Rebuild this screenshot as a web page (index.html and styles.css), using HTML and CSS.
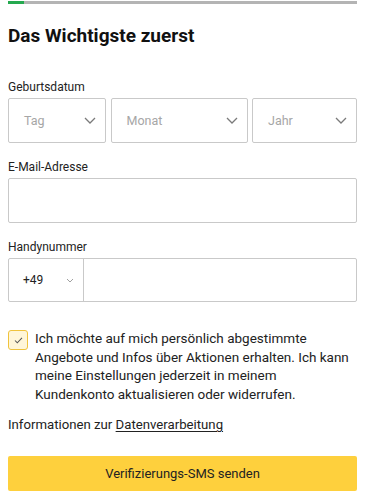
FILE: index.html
```html
<!DOCTYPE html>
<html lang="de">
<head>
    <meta charset="UTF-8">
    <meta name="viewport" content="width=device-width, initial-scale=1.0">
    <title>Das Wichtigste zuerst</title>
    <link rel="stylesheet" href="styles.css">
</head>
<body>
    <div class="progress"><div class="progress-fill"></div></div>

    <h1>Das Wichtigste zuerst</h1>

    <form class="signup">
        <div class="field">
            <label>Geburtsdatum</label>
            <div class="date-row">
                <div class="select">
                    <span class="placeholder">Tag</span>
                    <svg class="chevron" viewBox="0 0 12 7" width="12" height="7"><path d="M1 1l5 5 5-5" fill="none" stroke="currentColor" stroke-width="1.3"/></svg>
                </div>
                <div class="select">
                    <span class="placeholder">Monat</span>
                    <svg class="chevron" viewBox="0 0 12 7" width="12" height="7"><path d="M1 1l5 5 5-5" fill="none" stroke="currentColor" stroke-width="1.3"/></svg>
                </div>
                <div class="select">
                    <span class="placeholder">Jahr</span>
                    <svg class="chevron" viewBox="0 0 12 7" width="12" height="7"><path d="M1 1l5 5 5-5" fill="none" stroke="currentColor" stroke-width="1.3"/></svg>
                </div>
            </div>
        </div>

        <div class="field">
            <label>E-Mail-Adresse</label>
            <div class="input"></div>
        </div>

        <div class="field">
            <label>Handynummer</label>
            <div class="phone">
                <div class="country">
                    <span>+49</span>
                    <svg class="chevron-small" viewBox="0 0 8 5" width="8" height="5"><path d="M1 1l3 3 3-3" fill="none" stroke="currentColor" stroke-width="1"/></svg>
                </div>
                <div class="phone-number"></div>
            </div>
        </div>

        <div class="consent">
            <div class="checkbox">
                <svg viewBox="0 0 10 8" width="9" height="7"><path d="M1 4l2.6 2.6L9 1" fill="none" stroke="currentColor" stroke-width="1.2"/></svg>
            </div>
            <p>Ich möchte auf mich persönlich abgestimmte Angebote und Infos über Aktionen erhalten. Ich kann meine Einstellungen jederzeit in meinem Kundenkonto aktualisieren oder widerrufen.</p>
        </div>

        <p class="info">Informationen zur <a href="#">Datenverarbeitung</a></p>

        <button type="button">Verifizierungs-SMS senden</button>
    </form>
</body>
</html>
```

FILE: styles.css
```css
body {
    font-family: Roboto, "Liberation Sans", Arial, sans-serif;
    margin: 0;
    padding: 1px 10px 8px 8px;
    color: #222;
    background: #fff;
}
.progress {
    height: 3px;
    background-color: #b4b4b4;
}
.progress-fill {
    width: 16px;
    height: 100%;
    background-color: #25a94f;
}
h1 {
    font-size: 19px;
    font-weight: 700;
    color: #111;
    margin: 21px 0 0 0;
    line-height: 22px;
}
.signup {
    margin-top: 32px;
    display: flex;
    flex-direction: column;
}
.field {
    display: flex;
    flex-direction: column;
    margin-bottom: 16px;
}
.field label {
    font-size: 12px;
    line-height: 16px;
    color: #222;
    margin-bottom: 3px;
}
.date-row {
    display: grid;
    grid-template-columns: 98fr 137fr 105fr;
    gap: 4.5px;
}
.select {
    height: 45px;
    box-sizing: border-box;
    border: 1px solid #c9c9c9;
    border-radius: 2px;
    display: flex;
    align-items: center;
    justify-content: space-between;
    padding: 0 9px 0 15px;
}
.placeholder {
    font-size: 12.5px;
    color: #a6a6a6;
}
.chevron {
    color: #7a7a7a;
}
.input {
    height: 45px;
    box-sizing: border-box;
    border: 1px solid #c9c9c9;
    border-radius: 2px;
}
.phone {
    height: 44px;
    box-sizing: border-box;
    border: 1px solid #c9c9c9;
    border-radius: 2px;
    display: flex;
}
.country {
    width: 75px;
    box-sizing: border-box;
    border-right: 1px solid #c9c9c9;
    display: flex;
    align-items: center;
    justify-content: space-between;
    padding: 0 9px 0 14px;
    font-size: 12px;
    color: #222;
}
.chevron-small {
    color: #a0a0a0;
}
.phone-number {
    flex: 1;
}
.consent {
    display: flex;
    gap: 7px;
    margin-top: 11px;
}
.checkbox {
    flex: none;
    width: 20px;
    height: 20px;
    box-sizing: border-box;
    border: 1px solid #f0c33c;
    border-radius: 3px;
    background-color: #fff6d8;
    display: flex;
    align-items: center;
    justify-content: center;
    color: #555;
    margin-top: 1px;
}
.consent p {
    margin: 0;
    font-size: 13.5px;
    line-height: 18.5px;
    color: #222;
}
.info {
    font-size: 13.2px;
    margin: 14px 0 0 0;
    color: #222;
}
.info a {
    color: #222;
    text-decoration: underline;
    text-underline-offset: 2px;
}
button {
    margin-top: 24px;
    height: 35px;
    border: none;
    border-radius: 2px;
    background-color: #fed03d;
    font-family: inherit;
    font-size: 13px;
    color: #222;
    cursor: pointer;
}
```
